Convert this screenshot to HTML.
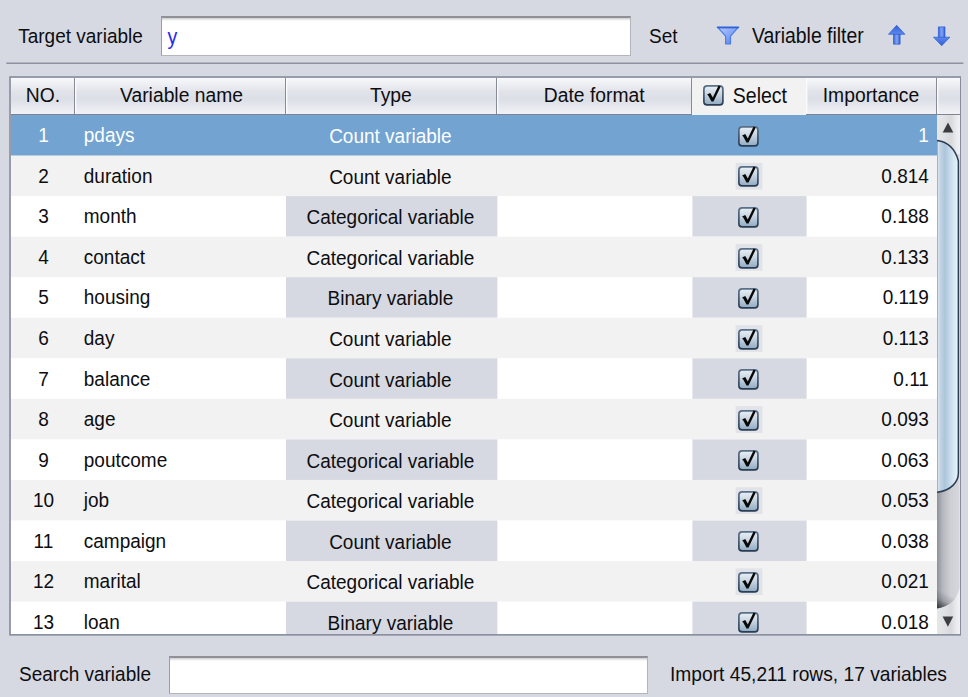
<!DOCTYPE html>
<html>
<head>
<meta charset="utf-8">
<title>Variable selection</title>
<style>
html,body{margin:0;padding:0;}
body{width:968px;height:697px;overflow:hidden;background:#d6d9e1;font-family:"Liberation Sans",sans-serif;font-size:19px;color:#0d0d10;position:relative;}
.abs{position:absolute;white-space:nowrap;}
.lbl{position:absolute;white-space:nowrap;line-height:40px;height:40px;margin-top:0.8px;transform:scaleY(1.09);transform-origin:0 26.6px;}
.inp{position:absolute;background:#fff;box-sizing:border-box;border:1.2px solid #b3b5ba;border-top:2px solid #8f9196;border-left:1.5px solid #9b9da2;box-shadow:inset 0 2.5px 2px -1px #cfcfd1;}
#tbl{position:absolute;left:10.6px;top:77.6px;width:949px;height:556.8px;background:#fff;overflow:hidden;}
#tin{position:absolute;left:-10.2px;top:-77.6px;width:968px;height:697px;}
.hd{position:absolute;top:77.8px;height:36.6px;line-height:36px;font-size:19.3px;text-align:center;box-sizing:border-box;
 background:linear-gradient(#f7f8fa 0%,#eff0f4 16%,#e2e4ea 36%,#dcdfe6 55%,#dee1e8 66%,#e8eaef 82%,#f1f2f6 100%);border-right:1.4px solid #858b99;box-shadow:inset 1.4px 0 0 #fafbfc;}
.hline{position:absolute;left:10px;top:113.6px;width:950px;height:1.4px;background:#7f8490;}
.hsel{position:absolute;left:692px;top:77.4px;width:113.5px;height:37.7px;background:#f2f2f2;}
.row{position:absolute;left:11px;width:925.4px;height:41.4px;line-height:41.6px;}
.row.sel{color:#fff;}
.c{position:absolute;top:0;height:41.4px;white-space:nowrap;box-sizing:border-box;transform:scaleY(1.09);transform-origin:0 27.4px;}
.no{left:0.3px;width:63.5px;text-align:center;}
.nm{left:63.5px;width:210px;padding-left:8.9px;}
.ty{left:273px;width:212px;text-align:center;line-height:44.8px;transform-origin:0 29px;}
.se{left:680.6px;width:114.6px;transform:none;}
.im{left:795.2px;width:129.8px;text-align:right;padding-right:7.5px;}
.cb{position:absolute;left:46.2px;top:10.7px;width:20.8px;height:20.8px;overflow:visible;}
.hx{display:inline-block;transform:scaleY(1.09);transform-origin:0 24.7px;}
</style>
</head>
<body>
<svg width="0" height="0" style="position:absolute">
<defs>
<linearGradient id="cbg" x1="0" y1="0" x2="0" y2="1"><stop offset="0" stop-color="#eaeff4"/><stop offset="0.4" stop-color="#ccd8e3"/><stop offset="1" stop-color="#90aac2"/></linearGradient>
<linearGradient id="cbs" x1="0" y1="0" x2="0" y2="1"><stop offset="0" stop-color="#5a7089"/><stop offset="1" stop-color="#283c52"/></linearGradient>
<g id="cbx"><rect x="0.9" y="0.9" width="19.2" height="19.2" rx="3.3" ry="3.3" fill="url(#cbg)" stroke="url(#cbs)" stroke-width="1.7"/><path d="M4.1 9.6 L7.3 8.1 L9.9 12.6 L15.7 0.5 L17.9 1.4 L10.6 16.6 L8.6 16.6 L5.4 10.9 Z" fill="#080808"/></g>
</defs>
</svg>

<div class="lbl" style="left:18.2px;top:16px;">Target variable</div>
<div class="inp" style="left:160.6px;top:15.6px;width:470px;height:40.4px;"></div>
<div class="lbl" style="left:167.4px;top:16.6px;color:#2b2bee;font-size:19.6px;">y</div>
<div class="lbl" style="left:649px;top:16px;">Set</div>
<div class="lbl" style="left:752px;top:15.4px;font-size:19.4px;">Variable filter</div>
<svg class="abs" style="left:0;top:0;" width="968" height="697" viewBox="0 0 968 697"><line x1="6.3" y1="63.35" x2="963.4" y2="63.35" stroke="#8d92a0" stroke-width="1.5"/><rect x="10" y="77" width="950.2" height="557.85" fill="none" stroke="#878d9d" stroke-width="1.6"/></svg>

<div id="tbl"><div id="tin">
<svg class="abs" style="left:10.6px;top:115.2px;" width="926.6" height="519.8" viewBox="10.6 115.2 926.6 519.8">
<rect x="10.6" y="115.20" width="926.6" height="40.85" fill="#72a3d1"/>
<rect x="10.6" y="155.75" width="926.6" height="40.85" fill="#f2f2f2"/>
<rect x="735.2" y="163.05" width="26.8" height="26.8" fill="#e1e3e9"/>
<rect x="10.6" y="196.30" width="926.6" height="40.85" fill="#ffffff"/>
<rect x="285.6" y="196.30" width="211.4" height="40.55" fill="#d6d9e1"/>
<rect x="692.0" y="196.30" width="114.2" height="40.55" fill="#d6d9e1"/>
<rect x="10.6" y="236.85" width="926.6" height="40.85" fill="#f2f2f2"/>
<rect x="735.2" y="244.15" width="26.8" height="26.8" fill="#e1e3e9"/>
<rect x="10.6" y="277.40" width="926.6" height="40.85" fill="#ffffff"/>
<rect x="285.6" y="277.40" width="211.4" height="40.55" fill="#d6d9e1"/>
<rect x="692.0" y="277.40" width="114.2" height="40.55" fill="#d6d9e1"/>
<rect x="10.6" y="317.95" width="926.6" height="40.85" fill="#f2f2f2"/>
<rect x="735.2" y="325.25" width="26.8" height="26.8" fill="#e1e3e9"/>
<rect x="10.6" y="358.50" width="926.6" height="40.85" fill="#ffffff"/>
<rect x="285.6" y="358.50" width="211.4" height="40.55" fill="#d6d9e1"/>
<rect x="692.0" y="358.50" width="114.2" height="40.55" fill="#d6d9e1"/>
<rect x="10.6" y="399.05" width="926.6" height="40.85" fill="#f2f2f2"/>
<rect x="735.2" y="406.35" width="26.8" height="26.8" fill="#e1e3e9"/>
<rect x="10.6" y="439.60" width="926.6" height="40.85" fill="#ffffff"/>
<rect x="285.6" y="439.60" width="211.4" height="40.55" fill="#d6d9e1"/>
<rect x="692.0" y="439.60" width="114.2" height="40.55" fill="#d6d9e1"/>
<rect x="10.6" y="480.15" width="926.6" height="40.85" fill="#f2f2f2"/>
<rect x="735.2" y="487.45" width="26.8" height="26.8" fill="#e1e3e9"/>
<rect x="10.6" y="520.70" width="926.6" height="40.85" fill="#ffffff"/>
<rect x="285.6" y="520.70" width="211.4" height="40.55" fill="#d6d9e1"/>
<rect x="692.0" y="520.70" width="114.2" height="40.55" fill="#d6d9e1"/>
<rect x="10.6" y="561.25" width="926.6" height="40.85" fill="#f2f2f2"/>
<rect x="735.2" y="568.55" width="26.8" height="26.8" fill="#e1e3e9"/>
<rect x="10.6" y="601.80" width="926.6" height="40.85" fill="#ffffff"/>
<rect x="285.6" y="601.80" width="211.4" height="40.55" fill="#d6d9e1"/>
<rect x="692.0" y="601.80" width="114.2" height="40.55" fill="#d6d9e1"/>
</svg>
<div class="row sel" style="top:115.20px"><span class="c no">1</span><span class="c nm">pdays</span><span class="c ty">Count variable</span><span class="c se"><svg class="cb" viewBox="0 0 21 21"><use href="#cbx"/></svg></span><span class="c im">1</span></div>
<div class="row g" style="top:155.75px"><span class="c no">2</span><span class="c nm">duration</span><span class="c ty">Count variable</span><span class="c se"><svg class="cb" viewBox="0 0 21 21"><use href="#cbx"/></svg></span><span class="c im">0.814</span></div>
<div class="row w" style="top:196.30px"><span class="c no">3</span><span class="c nm">month</span><span class="c ty">Categorical variable</span><span class="c se"><svg class="cb" viewBox="0 0 21 21"><use href="#cbx"/></svg></span><span class="c im">0.188</span></div>
<div class="row g" style="top:236.85px"><span class="c no">4</span><span class="c nm">contact</span><span class="c ty">Categorical variable</span><span class="c se"><svg class="cb" viewBox="0 0 21 21"><use href="#cbx"/></svg></span><span class="c im">0.133</span></div>
<div class="row w" style="top:277.40px"><span class="c no">5</span><span class="c nm">housing</span><span class="c ty">Binary variable</span><span class="c se"><svg class="cb" viewBox="0 0 21 21"><use href="#cbx"/></svg></span><span class="c im">0.119</span></div>
<div class="row g" style="top:317.95px"><span class="c no">6</span><span class="c nm">day</span><span class="c ty">Count variable</span><span class="c se"><svg class="cb" viewBox="0 0 21 21"><use href="#cbx"/></svg></span><span class="c im">0.113</span></div>
<div class="row w" style="top:358.50px"><span class="c no">7</span><span class="c nm">balance</span><span class="c ty">Count variable</span><span class="c se"><svg class="cb" viewBox="0 0 21 21"><use href="#cbx"/></svg></span><span class="c im">0.11</span></div>
<div class="row g" style="top:399.05px"><span class="c no">8</span><span class="c nm">age</span><span class="c ty">Count variable</span><span class="c se"><svg class="cb" viewBox="0 0 21 21"><use href="#cbx"/></svg></span><span class="c im">0.093</span></div>
<div class="row w" style="top:439.60px"><span class="c no">9</span><span class="c nm">poutcome</span><span class="c ty">Categorical variable</span><span class="c se"><svg class="cb" viewBox="0 0 21 21"><use href="#cbx"/></svg></span><span class="c im">0.063</span></div>
<div class="row g" style="top:480.15px"><span class="c no">10</span><span class="c nm">job</span><span class="c ty">Categorical variable</span><span class="c se"><svg class="cb" viewBox="0 0 21 21"><use href="#cbx"/></svg></span><span class="c im">0.053</span></div>
<div class="row w" style="top:520.70px"><span class="c no">11</span><span class="c nm">campaign</span><span class="c ty">Count variable</span><span class="c se"><svg class="cb" viewBox="0 0 21 21"><use href="#cbx"/></svg></span><span class="c im">0.038</span></div>
<div class="row g" style="top:561.25px"><span class="c no">12</span><span class="c nm">marital</span><span class="c ty">Categorical variable</span><span class="c se"><svg class="cb" viewBox="0 0 21 21"><use href="#cbx"/></svg></span><span class="c im">0.021</span></div>
<div class="row w" style="top:601.80px"><span class="c no">13</span><span class="c nm">loan</span><span class="c ty">Binary variable</span><span class="c se"><svg class="cb" viewBox="0 0 21 21"><use href="#cbx"/></svg></span><span class="c im">0.018</span></div>
<div class="hd" style="left:11px;width:64px;box-shadow:none;"><span class="hx">NO.</span></div>
<div class="hd" style="left:75px;width:210.2px;padding-left:3px;"><span class="hx">Variable name</span></div>
<div class="hd" style="left:285.2px;width:211.6px;"><span class="hx">Type</span></div>
<div class="hd" style="left:496.8px;width:195px;"><span class="hx">Date format</span></div>
<div class="hd" style="left:806px;width:130.2px;"><span class="hx">Importance</span></div>
<div class="hd" style="left:936.2px;width:24px;border-right:none;"></div>

<svg class="abs" style="left:937px;top:114.3px;" width="23" height="521" viewBox="0 0 23 521">
<defs>
<linearGradient id="tk" x1="0" y1="0" x2="1" y2="0"><stop offset="0" stop-color="#8e9198"/><stop offset="0.25" stop-color="#b4b7bd"/><stop offset="0.6" stop-color="#cdcfd5"/><stop offset="1" stop-color="#d6d8de"/></linearGradient>
<linearGradient id="th" x1="0" y1="0" x2="1" y2="0"><stop offset="0" stop-color="#e2eaf2"/><stop offset="0.14" stop-color="#c3d4e5"/><stop offset="0.36" stop-color="#adc5dc"/><stop offset="0.7" stop-color="#cfe2f0"/><stop offset="0.92" stop-color="#e3f2fa"/><stop offset="1" stop-color="#d6e6f1"/></linearGradient>
<linearGradient id="tks" gradientUnits="userSpaceOnUse" x1="11" y1="480" x2="4" y2="494.4"><stop offset="0" stop-color="#2e3034" stop-opacity="0"/><stop offset="0.5" stop-color="#2e3034" stop-opacity="0.22"/><stop offset="1" stop-color="#2e3034" stop-opacity="0.85"/></linearGradient>
<linearGradient id="bt" x1="0" y1="0" x2="1" y2="0"><stop offset="0" stop-color="#e6e7e9"/><stop offset="0.3" stop-color="#e1e2e4"/><stop offset="0.6" stop-color="#d7d9dc"/><stop offset="0.85" stop-color="#e9ebed"/><stop offset="1" stop-color="#f0f2f4"/></linearGradient>
</defs>
<rect x="0" y="0" width="23" height="521" fill="url(#bt)"/>
<path d="M0 40 L22.6 40 L22.6 474 Q19 491.5 0 494.4 Z" fill="url(#tk)"/>
<path d="M0 40 L22.6 40 L22.6 474 Q19 491.5 0 494.4 Z" fill="url(#tks)"/>
<path d="M0.2 26.6 Q16.4 28.6 21.4 47 L21.4 359 C21.4 368 14 376.5 0.2 378.2 Z" fill="url(#th)" stroke="#2b3d52" stroke-width="1.5"/>
<rect x="0" y="27.5" width="0.9" height="350" fill="#b4bfcb"/>
<path d="M5.7 18.6 L16.3 18.6 L11 8.4 Z" fill="#3c3c3e"/>
<path d="M5.6 502.5 L16.2 502.5 L10.9 512.8 Z" fill="#3e3e40"/>
</svg>
<div class="hline"></div>
<div class="hsel"><svg class="abs" style="left:10.6px;top:7.8px;width:20.8px;height:20.8px;" viewBox="0 0 21 21"><use href="#cbx"/></svg><div class="abs" style="left:40.4px;top:0;line-height:38.4px;font-size:19.5px;"><span class="hx" style="transform-origin:0 25.9px;">Select</span></div></div>
</div></div>


<svg class="abs" style="left:714px;top:22px;" width="30" height="28" viewBox="714 22 30 28">
<defs><linearGradient id="fg" x1="0" y1="0" x2="1" y2="1"><stop offset="0" stop-color="#b3c8fa"/><stop offset="0.5" stop-color="#86a5f4"/><stop offset="1" stop-color="#4d78e6"/></linearGradient>
<linearGradient id="ag" x1="0" y1="0" x2="1" y2="0"><stop offset="0" stop-color="#2c5ed3"/><stop offset="0.4" stop-color="#7d9ff3"/><stop offset="0.6" stop-color="#7598f0"/><stop offset="1" stop-color="#2c5ed3"/></linearGradient>
<linearGradient id="ah" x1="0" y1="0" x2="0" y2="1"><stop offset="0" stop-color="#2d60d6"/><stop offset="1" stop-color="#5f88ee"/></linearGradient>
<linearGradient id="ad" x1="0" y1="0" x2="0" y2="1"><stop offset="0" stop-color="#5f88ee"/><stop offset="1" stop-color="#2d60d6"/></linearGradient></defs>
<path d="M718 27.6 L738 27.6 L730.5 36.2 L730.5 44 L725.6 44 L725.6 36.2 Z" fill="url(#fg)" stroke="#4c7bea" stroke-width="1.2" stroke-linejoin="round"/>
<path d="M717.6 27.3 L738.4 27.3" stroke="#3163d8" stroke-width="1.7" stroke-linecap="round"/>
</svg>
<svg class="abs" style="left:884px;top:20px;" width="26" height="30" viewBox="884 20 26 30">
<path d="M893.5 33.6 L900.1 33.6 L900.1 44.2 L893.5 44.2 Z" fill="url(#ag)" stroke="#2b5cd0" stroke-width="0.7" stroke-linejoin="round"/>
<path d="M896.7 25.3 L904.9 34.3 L888.5 34.3 Z" fill="url(#ah)" stroke="#2b5cd0" stroke-width="0.7" stroke-linejoin="round"/>
</svg>
<svg class="abs" style="left:929px;top:20px;" width="26" height="30" viewBox="929 20 26 30">
<path d="M938.4 26.9 L945 26.9 L945 37.8 L938.4 37.8 Z" fill="url(#ag)" stroke="#2b5cd0" stroke-width="0.7" stroke-linejoin="round"/>
<path d="M941.7 45.7 L949.9 37.2 L933.5 37.2 Z" fill="url(#ad)" stroke="#2b5cd0" stroke-width="0.7" stroke-linejoin="round"/>
</svg>
<div class="lbl" style="left:19px;top:653.8px;">Search variable</div>
<div class="inp" style="left:168.6px;top:655.6px;width:479.2px;height:38.2px;"></div>
<div class="lbl" style="left:670px;top:653.8px;font-size:19.2px;">Import 45,211 rows, 17 variables</div>
</body>
</html>
